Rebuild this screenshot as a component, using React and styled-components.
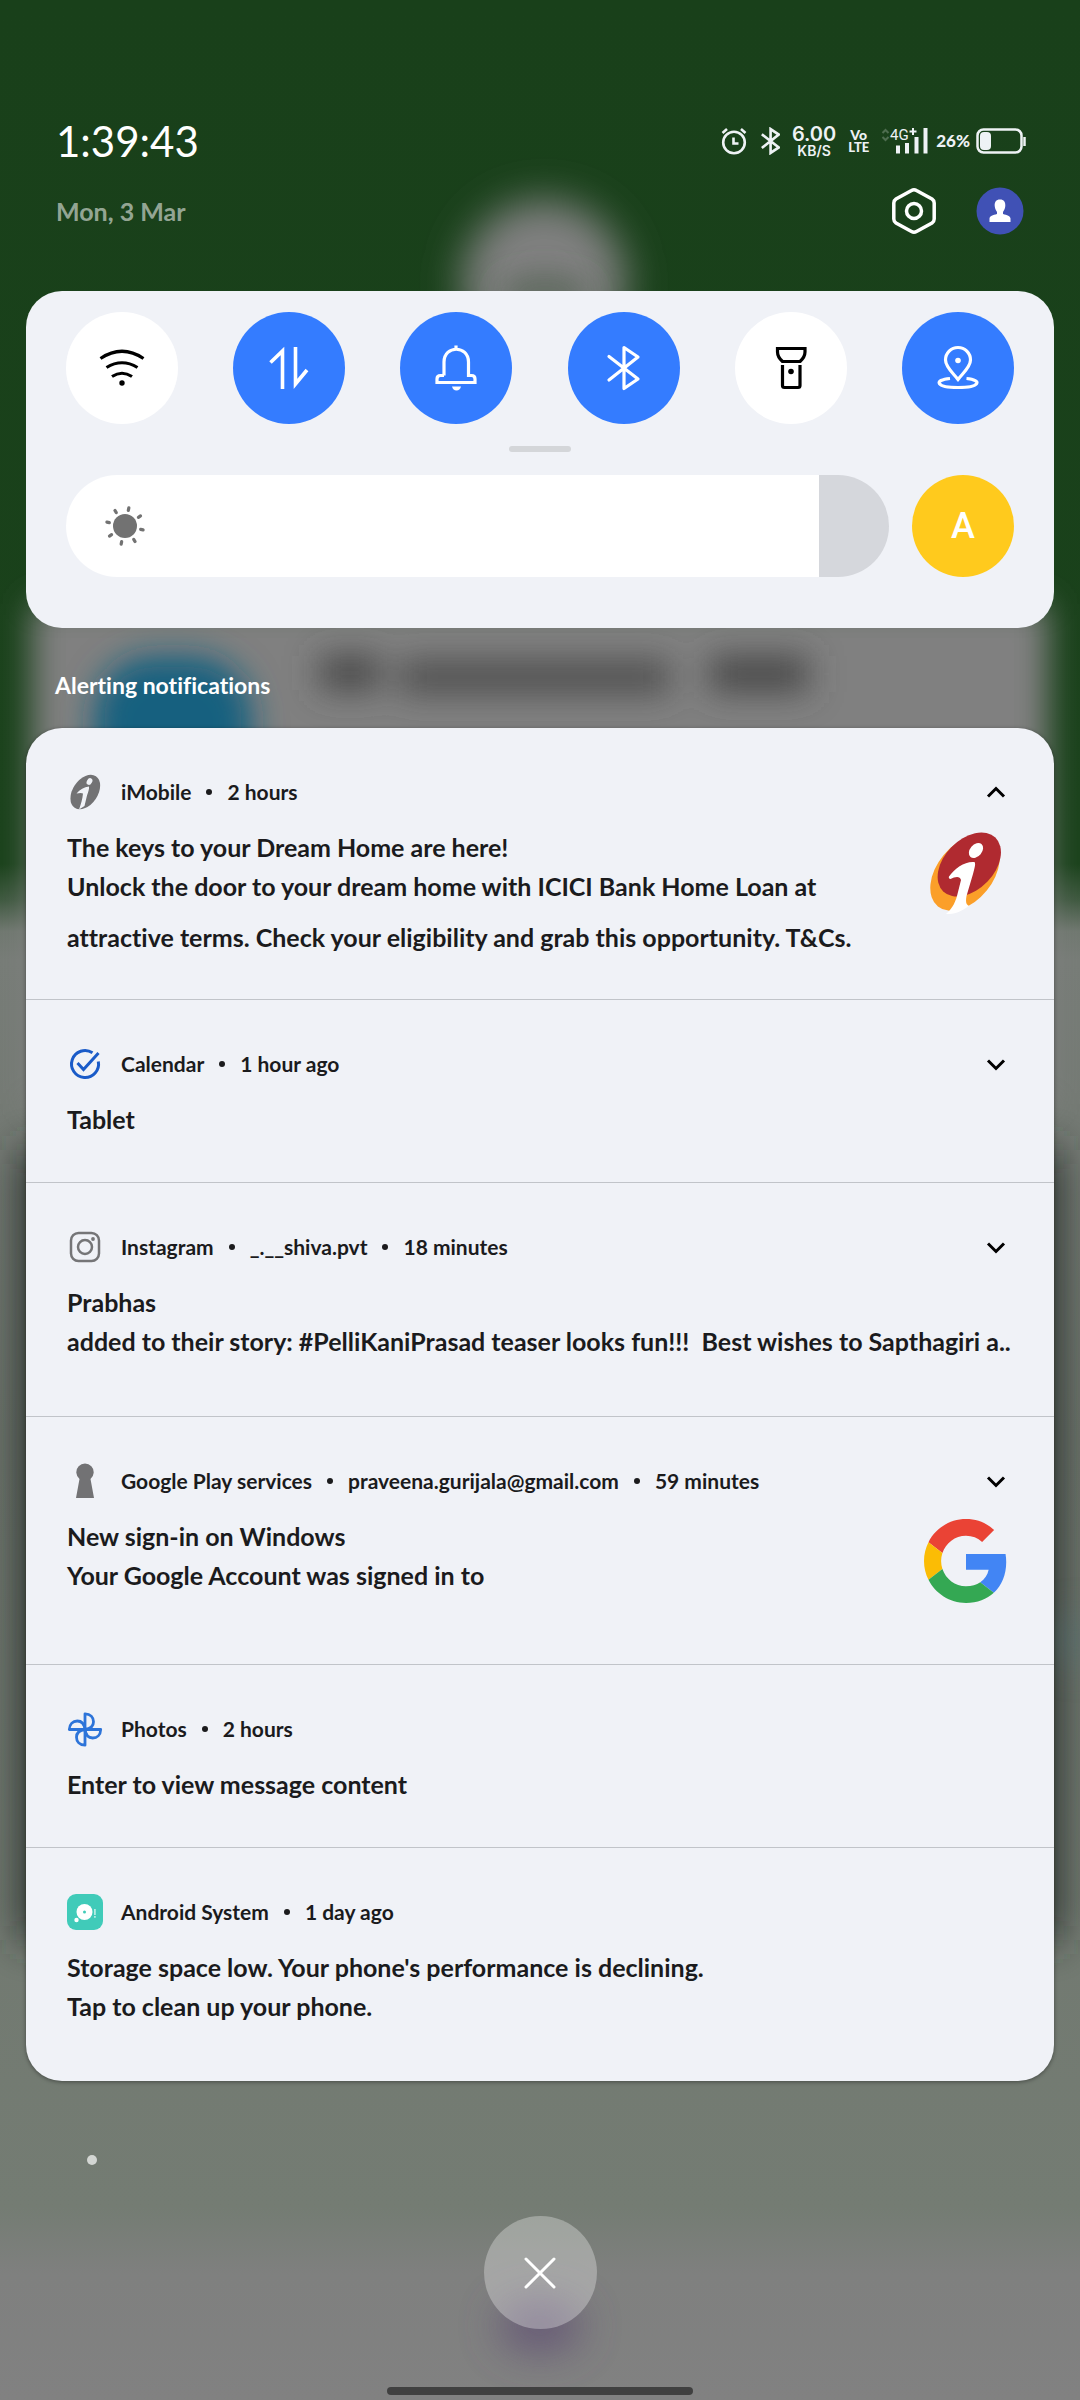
import React, { useState } from "react";
import styled, { createGlobalStyle } from "styled-components";

const GlobalStyle = createGlobalStyle`
  *, *::before, *::after { box-sizing: border-box; }
  html, body { margin: 0; }
  body {
    font-family: Lato, "Liberation Sans", sans-serif;
    font-variant-ligatures: none;
    color: #1b1b1d;
    background: #757b74;
  }
  button { font: inherit; color: inherit; border: 0; padding: 0; background: none; cursor: pointer; }
  svg { display: block; flex: none; }
`;

const Screen = styled.div`
  position: relative;
  isolation: isolate;
  min-height: 100vh;
  overflow: hidden;
  display: flex;
  flex-direction: column;
`;

const Wallpaper = styled.svg`
  position: absolute;
  inset: 0;
  z-index: -1;
  width: 100%;
  height: 100%;
`;

const TopArea = styled.header`
  display: flex;
  flex-direction: column;
  gap: 22px;
  padding: 117px 54px 56px 56px;
`;

const TopRow = styled.div`
  display: flex;
  align-items: center;
  justify-content: space-between;
  height: 48px;
  color: #fff;
`;

const Clock = styled.time`
  font-size: 42px;
  line-height: 46px;
`;

const DateText = styled.time`
  font-size: 25px;
  line-height: 32px;
  font-weight: 700;
  color: rgba(255, 255, 255, 0.55);
`;

const StatusIcons = styled.div`
  display: flex;
  align-items: center;
  color: #eef2f5;
`;

const StatusItem = styled.span`
  display: flex;
  margin-left: ${(p) => p.$gap}px;
`;

const Stack = styled.span`
  display: flex;
  flex-direction: column;
  align-items: center;
  margin-left: 12px;
  font-family: ${(p) => p.$family};
  font-weight: ${(p) => p.$weight};
`;

const StackLine = styled.span`
  font-size: ${(p) => p.$size}px;
  line-height: ${(p) => p.$line}px;
`;

const Percent = styled.span`
  margin-left: 8px;
  font-size: 17px;
  line-height: 24px;
  font-weight: 900;
`;

const HeaderActions = styled.div`
  display: flex;
  align-items: center;
  gap: 38px;
  padding-right: 2px;
`;

const IconButton = styled.button`
  display: flex;
  align-items: center;
  justify-content: center;
  width: 48px;
  height: 48px;
`;

const Panel = styled.section`
  margin: 0 26px;
  padding: 21px 40px 51px;
  border-radius: 36px;
  background: #f0f2f7;
`;

const Toggles = styled.div`
  display: flex;
  justify-content: space-between;
`;

const Toggle = styled.button`
  display: flex;
  align-items: center;
  justify-content: center;
  width: 112px;
  height: 112px;
  border-radius: 50%;
  background: ${(p) => (p.$on ? "#347cff" : "#fff")};
  color: ${(p) => (p.$on ? "#fff" : "#000")};
`;

const Handle = styled.div`
  width: 62px;
  height: 6px;
  margin: 22px auto 23px;
  border-radius: 3px;
  background: #d4d6d9;
`;

const BrightnessRow = styled.div`
  display: flex;
  gap: 23px;
`;

const SliderWrap = styled.label`
  position: relative;
  flex: 1;
  display: flex;
`;

const SunIcon = styled.svg`
  position: absolute;
  left: 37px;
  top: 29px;
  color: #727272;
  pointer-events: none;
`;

const Slider = styled.input`
  appearance: none;
  flex: 1;
  height: 102px;
  margin: 0;
  border-radius: 51px;
  &::-webkit-slider-thumb { appearance: none; width: 1px; height: 102px; }
`;

const AutoButton = styled.button`
  width: 102px;
  height: 102px;
  border-radius: 50%;
  background: #ffca1d;
  color: #fff;
  && { font-family: Roboto, sans-serif; font-size: 36px; font-weight: 500; }
`;

const SectionTitle = styled.h2`
  display: flex;
  align-items: center;
  height: 100px;
  margin: 0;
  padding: 14px 55px 0;
  font-size: 23px;
  font-weight: 700;
  color: #fff;
`;

const List = styled.ul`
  margin: 0 26px;
  padding: 0;
  list-style: none;
  overflow: hidden;
  border-radius: 36px;
  background: #f0f2f7;
  box-shadow: 0 1px 4px rgba(0, 0, 0, 0.4);
`;

const Item = styled.li`
  display: flex;
  flex-direction: column;
  gap: 18px;
  padding: 44px 46px ${(p) => (p.$expanded ? 36 : 49)}px 41px;
  border-bottom: 1px solid #c1c4c9;
  &:last-child { border-bottom: 0; }
`;

const ItemHead = styled.div`
  display: flex;
  align-items: center;
  height: 40px;
  font-size: 21px;
  line-height: 24px;
  font-weight: 700;
  white-space: nowrap;
`;

const Meta = styled.div`
  display: flex;
  flex: 1;
  margin-left: 18px;
`;

const MetaPart = styled.span`
  display: flex;
  align-items: center;
  & + &::before {
    content: "";
    width: 6px;
    height: 6px;
    margin: 0 15px;
    border-radius: 50%;
    background: currentColor;
  }
`;

const Chevron = styled.button`
  display: flex;
  align-items: center;
  justify-content: center;
  width: 24px;
  height: 40px;
  color: #000;
`;

const Content = styled.div`
  display: flex;
  justify-content: space-between;
  white-space: pre;
`;

const Texts = styled.div`
  padding-top: 3px;
  font-size: 25px;
  font-weight: 700;
`;

const Title = styled.p`
  margin: 0;
  line-height: 28px;
`;

const Body = styled.p`
  margin: 0;
  line-height: 51px;
`;

const Art = styled.div`
  margin-bottom: 12px;
`;

const Footer = styled.footer`
  display: flex;
  flex-direction: column;
  align-items: center;
  padding: 74px 87px 5px;
`;

const HiddenDot = styled.span`
  align-self: flex-start;
  width: 10px;
  height: 10px;
  border-radius: 50%;
  background: #d3d6d3;
`;

const CloseButton = styled.button`
  display: flex;
  align-items: center;
  justify-content: center;
  width: 113px;
  height: 113px;
  margin: 51px 0 58px;
  border-radius: 50%;
  background: rgba(255, 255, 255, 0.3);
  color: #fff;
`;

const NavBar = styled.div`
  width: 306px;
  height: 8px;
  border-radius: 4px;
  background: #404040;
`;

const Icon = ({ size = 56, w, h, box, stroke = 3, children }) => (
  <svg
    width={w || size}
    height={h || size}
    viewBox={box || `0 0 ${w || size} ${h || size}`}
    fill="none"
    stroke="currentColor"
    strokeWidth={stroke}
    aria-hidden="true"
  >
    {children}
  </svg>
);

const Backdrop = () => (
  <Wallpaper viewBox="0 0 1080 2400" preserveAspectRatio="none" aria-hidden="true">
    <defs>
      <filter id="soft" filterUnits="userSpaceOnUse" x="-100" y="-100" width="1280" height="2600">
        <feGaussianBlur stdDeviation="20" />
      </filter>
      <filter id="edge" filterUnits="userSpaceOnUse" x="-100" y="-100" width="1280" height="2600">
        <feGaussianBlur stdDeviation="16" />
      </filter>
      <linearGradient id="wall" x1="0" y1="0" x2="0" y2="2400" gradientUnits="userSpaceOnUse">
        <stop offset="0" stopColor="#19401a" />
        <stop offset="0.36" stopColor="#1a421b" />
        <stop offset="0.375" stopColor="#3f5940" />
        <stop offset="0.388" stopColor="#707870" />
        <stop offset="0.4" stopColor="#777c77" />
        <stop offset="0.6" stopColor="#6e756d" />
        <stop offset="0.92" stopColor="#747c73" />
        <stop offset="0.948" stopColor="#7f807f" />
        <stop offset="1" stopColor="#818181" />
      </linearGradient>
    </defs>
    <rect width="1080" height="2400" fill="url(#wall)" />
    <circle cx="544" cy="282" r="82" fill="#808080" filter="url(#soft)" />
    <path d="M505 300Q545 280 585 300" stroke="#4f5f4f" strokeWidth="22" fill="none" filter="url(#edge)" />
    <rect x="32" y="604" width="1016" height="500" fill="#808080" filter="url(#edge)" />
    <rect x="94" y="656" width="158" height="150" rx="60" fill="#17607f" filter="url(#edge)" />
    <g fill="#484848" filter="url(#edge)">
      <rect x="320" y="656" width="60" height="34" />
      <rect x="400" y="660" width="270" height="34" opacity="0.85" />
      <rect x="710" y="656" width="98" height="36" />
    </g>
    <rect x="20" y="1150" width="1040" height="790" fill="#2c302d" filter="url(#soft)" />
    <circle cx="1076" cy="1640" r="22" fill="#4f7378" opacity="0.5" filter="url(#soft)" />
    <ellipse cx="540" cy="2326" rx="42" ry="26" fill="#5d4b72" opacity="0.75" filter="url(#soft)" />
  </Wallpaper>
);

const bluetooth = "M13 16.5 42 39 28 48.5V7.5L42 17 13 40";

const TOGGLES = [
  {
    name: "Wi-Fi",
    on: false,
    art: (
      <>
        <path d="M6.5 18.5Q28 4 49.5 18.5M12.5 27.5Q28 18 43.5 27.5M18 36.5Q28 30 38 36.5" />
        <circle cx="28" cy="43" r="2.7" fill="currentColor" stroke="none" />
      </>
    ),
  },
  {
    name: "Mobile data",
    on: true,
    art: <path d="M9.5 22.5 21.5 11V49M34.5 7V44L46 30" strokeWidth="3.6" />,
  },
  {
    name: "Ring",
    on: true,
    art: (
      <>
        <path d="M28 5.5V9M16 35.5V22C16 5 40.5 5 40.5 22V35.5H43.5Q47 35.5 47 39V42.5H9V39Q9 35.5 12.5 35.5H16" />
        <path d="M24 46.5H33Q32 50.5 28.5 50.5T24 46.5Z" fill="currentColor" stroke="none" />
      </>
    ),
  },
  { name: "Bluetooth", on: true, art: <path d={bluetooth} strokeLinejoin="round" strokeLinecap="round" /> },
  {
    name: "Torch",
    on: false,
    art: (
      <>
        <path d="M14.5 8.5H42V12Q42 17 37 21.5H19.5Q14.5 17 14.5 12Z" />
        <path d="M19.5 25V45.5Q19.5 47.5 21.5 47.5H35Q37 47.5 37 45.5V25" />
        <circle cx="28" cy="31.5" r="2.8" fill="currentColor" stroke="none" />
      </>
    ),
  },
  {
    name: "Location",
    on: true,
    art: (
      <>
        <path d="M28 39.5C23 33 15.5 27 15.5 20A12.5 12.5 0 0 1 40.5 20C40.5 27 33 33 28 39.5Z" />
        <path d="M20 38.5C3 40 6 47.5 28 47.5S53 40 36.5 38.5" />
        <circle cx="28" cy="20.5" r="2.8" fill="currentColor" stroke="none" />
      </>
    ),
  },
];

const petal = "M18 18.5V2.8C23.5 3 26.5 6.5 26.5 10.8S23.5 17.8 18 18.5";

const ImobileSmall = () => (
  <Icon size={36} stroke="0">
    <ellipse cx="18.3" cy="18" rx="19" ry="12.5" transform="rotate(-56 18.3 18)" fill="#727274" />
    <ellipse cx="22.5" cy="7.5" rx="2.6" ry="3.6" transform="rotate(30 22.5 7.5)" fill="#f0f2f7" />
    <path
      d="M9.5 19.5C13 15.5 17 13 22 12.5 22.5 15 21 18.5 20 21.5L17.5 32 12 35.5C14 30 15.5 25 16 19.5 14.5 18.5 12 19 9.5 19.5Z"
      fill="#f0f2f7"
    />
  </Icon>
);

const CalendarIcon = () => (
  <Icon size={36}>
    <g stroke="#1a5bc8">
      <path d="M25.5 6.8A13.5 13.5 0 1 0 31.3 15.5" />
      <path d="M10.5 17 16.5 23.5 31.5 7" />
    </g>
  </Icon>
);

const InstagramIcon = () => (
  <Icon size={36} stroke="2.5">
    <g stroke="#757577">
      <rect x="4" y="4" width="28" height="28" rx="7.5" />
      <circle cx="18" cy="18" r="7" />
      <circle cx="26" cy="10" r="1.9" fill="#757577" stroke="none" />
    </g>
  </Icon>
);

const KeyholeIcon = () => (
  <Icon size={36} stroke="0">
    <path d="M12.5 16A8.7 8.7 0 1 1 23.5 16L27 35H9Z" fill="#727274" />
  </Icon>
);

const PhotosIcon = () => (
  <Icon size={36} stroke="2.8">
    <g stroke="#2d74d9" strokeLinejoin="round">
      {[0, 90, 180, 270].map((a) => (
        <path key={a} d={petal} transform={`rotate(${a} 18 18.5)`} />
      ))}
    </g>
  </Icon>
);

const StorageIcon = () => (
  <Icon size={36} stroke="0">
    <rect width="36" height="36" rx="9" fill="#40cbb9" />
    <circle cx="17.5" cy="18" r="8" fill="#fff" />
    <circle cx="17.5" cy="18" r="1.5" fill="#40cbb9" />
    <circle cx="9.5" cy="26" r="2.2" fill="#fff" />
    <path d="M27 15h1.8v6H27zM27 22h1.8v1.8H27z" fill="#b5ebe3" />
  </Icon>
);

const ImobileLogo = () => (
  <Icon size={84} stroke="0">
    <ellipse cx="41" cy="43" rx="43" ry="28" transform="rotate(-51 41 43)" fill="#fb9f29" />
    <ellipse cx="45.3" cy="34.5" rx="37.5" ry="25" transform="rotate(-46 45.3 34.5)" fill="#b02a30" />
    <ellipse cx="52" cy="20.5" rx="6" ry="8.5" transform="rotate(40 52 20.5)" fill="#fff" />
    <path
      d="M25 46.5C31 38 41 31 50.5 32 52 34 50.5 38 49 44L42.5 66C41.5 72 42 74.5 45 76 38 81 31 84.5 22 84 29 78 32 71 34 62L37 50C36 45.5 31 46.5 26.5 49 25 49 24.5 48 25 46.5Z"
      fill="#fff"
    />
  </Icon>
);

const GoogleLogo = () => (
  <Icon size={84} box="0 0 48 48" stroke="0">
    <path fill="#ea4335" d="M24 9.5c3.54 0 6.71 1.22 9.21 3.6l6.85-6.85C35.9 2.38 30.47 0 24 0 14.62 0 6.51 5.38 2.56 13.22l7.98 6.19C12.43 13.72 17.74 9.5 24 9.5z" />
    <path fill="#4285f4" d="M46.98 24.55c0-1.57-.15-3.09-.38-4.55H24v9.02h12.94c-.58 2.96-2.26 5.48-4.78 7.18l7.73 6c4.51-4.18 7.09-10.36 7.09-17.65z" />
    <path fill="#fbbc05" d="M10.53 28.59c-.48-1.45-.76-2.99-.76-4.59s.27-3.14.76-4.59l-7.98-6.19C.92 16.46 0 20.12 0 24c0 3.88.92 7.54 2.56 10.78l7.97-6.19z" />
    <path fill="#34a853" d="M24 48c6.48 0 11.93-2.13 15.89-5.81l-7.73-6c-2.15 1.45-4.92 2.3-8.16 2.3-6.26 0-11.57-4.22-13.47-9.91l-7.98 6.19C6.51 42.62 14.62 48 24 48z" />
  </Icon>
);

const NOTIFICATIONS = [
  {
    icon: <ImobileSmall />,
    meta: ["iMobile", "2 hours"],
    chevron: "up",
    title: "The keys to your Dream Home are here!",
    body: "Unlock the door to your dream home with ICICI Bank Home Loan at\nattractive terms. Check your eligibility and grab this opportunity. T&Cs.",
    art: <ImobileLogo />,
  },
  { icon: <CalendarIcon />, meta: ["Calendar", "1 hour ago"], chevron: "down", title: "Tablet" },
  {
    icon: <InstagramIcon />,
    meta: ["Instagram", "_.__shiva.pvt", "18 minutes"],
    chevron: "down",
    title: "Prabhas",
    body: "added to their story: #PelliKaniPrasad teaser looks fun!!!  Best wishes to Sapthagiri a..",
  },
  {
    icon: <KeyholeIcon />,
    meta: ["Google Play services", "praveena.gurijala@gmail.com", "59 minutes"],
    chevron: "down",
    title: "New sign-in on Windows",
    body: "Your Google Account was signed in to",
    art: <GoogleLogo />,
  },
  { icon: <PhotosIcon />, meta: ["Photos", "2 hours"], title: "Enter to view message content" },
  {
    icon: <StorageIcon />,
    meta: ["Android System", "1 day ago"],
    title: "Storage space low. Your phone's performance is declining.",
    body: "Tap to clean up your phone.",
  },
];

function Notification({ icon, meta, chevron, title, body, art }) {
  return (
    <Item $expanded={chevron === "up"}>
      <ItemHead>
        {icon}
        <Meta>
          {meta.map((m) => (
            <MetaPart key={m}>{m}</MetaPart>
          ))}
        </Meta>
        {chevron && (
          <Chevron aria-label={chevron === "up" ? "Collapse" : "Expand"}>
            <Icon size={24}>
              <path d={chevron === "up" ? "M4 16.5 12 8.5 20 16.5" : "M4 8.500 12 16.500 20 8.500"} />
            </Icon>
          </Chevron>
        )}
      </ItemHead>
      <Content>
        <Texts>
          <Title>{title}</Title>
          {body && <Body>{body}</Body>}
        </Texts>
        {art && <Art>{art}</Art>}
      </Content>
    </Item>
  );
}

function Status() {
  return (
    <StatusIcons>
      <Icon w={26} h={28} stroke="2.6">
        <circle cx="13" cy="15.5" r="10.8" />
        <path d="M12.5 10.5V16.5H17.5M1.5 6 6 2M24.5 6 20 2" />
      </Icon>
      <StatusItem $gap={13}>
        <Icon w={20} h={28} box="10 4 34 48" stroke="4.5">
          <path d={bluetooth} />
        </Icon>
      </StatusItem>
      <Stack $family="Inter, sans-serif" $weight={600}>
        <StackLine $size={20} $line={18}>6.00</StackLine>
        <StackLine $size={14} $line={15}>KB/S</StackLine>
      </Stack>
      <Stack $family="Lato, sans-serif" $weight={900}>
        <StackLine $size={14} $line={13}>Vo</StackLine>
        <StackLine $size={13} $line={13}>LTE</StackLine>
      </Stack>
      <StatusItem $gap={12}>
        <Icon w={47} h={28} stroke="2">
          <path d="M1.5 6 4.5 3 7.500 6M1.5 10 4.5 13 7.5 10" opacity="0.25" />
          <text x="9" y="13" fill="currentColor" stroke="none" fontFamily="Roboto, sans-serif" fontSize="15">
            4G
          </text>
          <path d="M32 1V8M28.5 4.500H35.500" />
          <path d="M17 18.5V26.5M26 16V26.5M35.5 10V26.5M44.5 1V26.5" strokeWidth="4" />
        </Icon>
      </StatusItem>
      <Percent>26%</Percent>
      <StatusItem $gap={6}>
        <Icon w={50} h={28} stroke="2.5">
          <rect x="1.5" y="2.5" width="44" height="23" rx="6" />
          <rect x="4" y="5" width="11" height="18" rx="4" fill="currentColor" stroke="none" />
          <path d="M48.5 10V19" />
        </Icon>
      </StatusItem>
    </StatusIcons>
  );
}

export default function App() {
  const [level, setLevel] = useState(915);
  return (
    <Screen>
      <GlobalStyle />
      <Backdrop />
      <TopArea>
        <TopRow>
          <Clock>1:39:43</Clock>
          <Status />
        </TopRow>
        <TopRow>
          <DateText>Mon, 3 Mar</DateText>
          <HeaderActions>
            <IconButton aria-label="Settings">
              <Icon size={48} stroke="3.5">
                <path d="M21.5 3.5Q24 2 26.5 3.5L42 12Q44.2 13.5 44.2 16V32Q44.2 34.5 42 36L26.5 44.5Q24 46 21.5 44.5L6 36Q3.8 34.5 3.8 32V16Q3.8 13.5 6 12Z" />
                <circle cx="24" cy="24" r="7.5" />
              </Icon>
            </IconButton>
            <IconButton aria-label="Account">
              <Icon size={48} stroke="0">
                <circle cx="24" cy="24" r="23.5" fill="#4051b5" />
                <path
                  d="M24 12.5C28 12.5 29.5 15 29.3 19 29 22 28 23.5 27 25V27C31 28 34.5 29 34.5 31.5V35H13.5V31.5C13.5 29 17 28 21 27V25C20 23.5 19 22 18.7 19 18.5 15 20 12.5 24 12.5Z"
                  fill="#fff"
                />
              </Icon>
            </IconButton>
          </HeaderActions>
        </TopRow>
      </TopArea>

      <Panel>
        <Toggles>
          {TOGGLES.map((t) => (
            <Toggle key={t.name} $on={t.on} aria-label={t.name} aria-pressed={t.on}>
              <Icon stroke="3.2">{t.art}</Icon>
            </Toggle>
          ))}
        </Toggles>
        <Handle />
        <BrightnessRow>
          <SliderWrap>
            <SunIcon width="44" height="44" viewBox="-22 -22 44 44" aria-hidden="true">
              <circle r="12" fill="currentColor" />
              {[12, 57, 102, 147, 192, 237, 282, 327].map((a) => (
                <path
                  key={a}
                  d="M0-16V-18.5"
                  stroke="currentColor"
                  strokeWidth="3.2"
                  strokeLinecap="round"
                  transform={`rotate(${a})`}
                />
              ))}
            </SunIcon>
            <Slider
              type="range"
              min="0"
              max="1000"
              value={level}
              aria-label="Brightness"
              onChange={(e) => setLevel(Number(e.target.value))}
              style={{ background: `linear-gradient(to right, #fff ${level / 10}%, #d5d7dc ${level / 10}%)` }}
            />
          </SliderWrap>
          <AutoButton aria-label="Automatic brightness">A</AutoButton>
        </BrightnessRow>
      </Panel>

      <SectionTitle>Alerting notifications</SectionTitle>
      <List>
        {NOTIFICATIONS.map((n) => (
          <Notification key={n.title} {...n} />
        ))}
      </List>

      <Footer>
        <HiddenDot />
        <CloseButton aria-label="Clear all notifications">
          <Icon size={36} stroke="3">
            <path d="M4 4 32 32M32 4 4 32" strokeLinecap="round" />
          </Icon>
        </CloseButton>
        <NavBar />
      </Footer>
    </Screen>
  );
}
